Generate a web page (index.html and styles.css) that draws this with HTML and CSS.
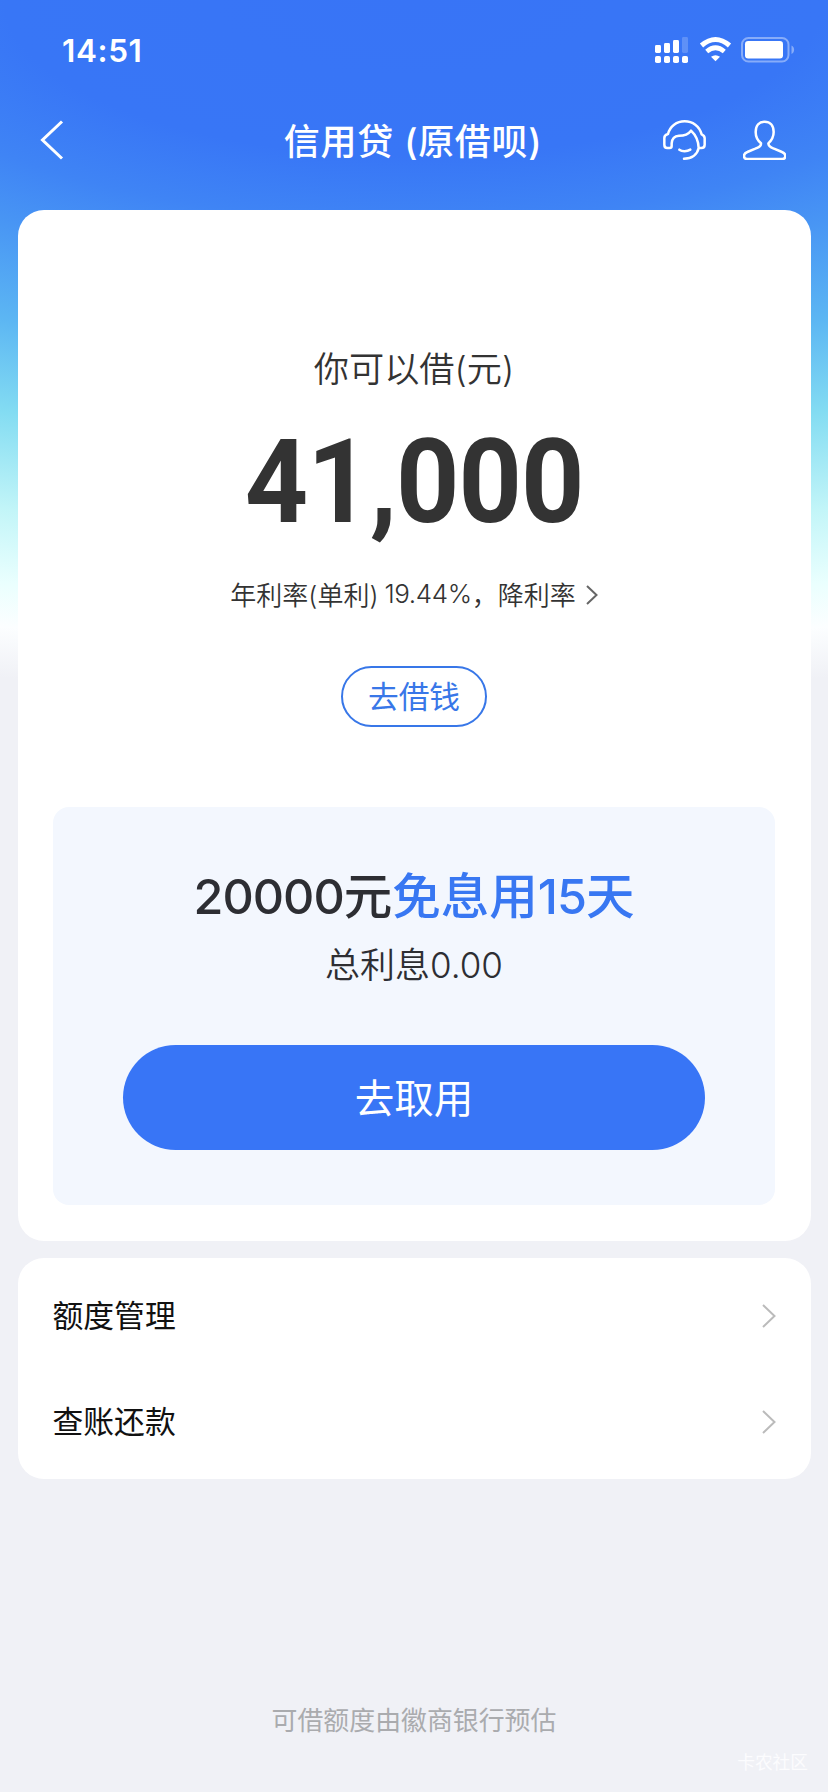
FILE: index.html
```html
<!DOCTYPE html>
<html lang="zh-CN">
<head>
<meta charset="utf-8">
<title>信用贷</title>
<link rel="stylesheet" href="styles.css">
</head>
<body>
<div class="page">
  <div class="status">
    <span class="time">14:51</span>
    <svg class="status-icons" width="140" height="30" viewBox="655 35 140 30">
      <g fill="#fff">
        <rect x="655" y="45" width="6" height="8" rx="1.4"/>
        <rect x="664" y="43" width="6" height="10" rx="1.4"/>
        <rect x="673" y="40" width="6" height="13" rx="1.4"/>
        <rect x="682" y="37" width="6" height="16" rx="1.4" opacity=".2"/>
        <rect x="655" y="56" width="6" height="7" rx="1.8"/>
        <rect x="664" y="56" width="6" height="7" rx="1.8"/>
        <rect x="673" y="56" width="6" height="7" rx="1.8"/>
        <rect x="682" y="56" width="6" height="7" rx="1.8"/>
        <path d="M711 56.800Q715.500 53.600 720 56.800L715.500 61.300Z"/>
        <rect x="745" y="41" width="38" height="17.500" rx="3.200"/>
        <path d="M791.500 45.500C795 47 795 52.500 791.500 54Z" opacity=".4"/>
      </g>
      <g fill="none" stroke="#fff">
        <path d="M701.500 45.500Q715.500 33.500 729.500 45.500" stroke-width="5"/>
        <path d="M706.700 51.500Q715.500 44 724.300 51.500" stroke-width="4.600"/>
        <rect x="742" y="38" width="46.500" height="23.500" rx="6.500" stroke-width="2" opacity=".4"/>
      </g>
    </svg>
  </div>
  <div class="nav">
    <svg class="back" width="24" height="40" viewBox="0 0 24 40"><path d="M22 1.500L2.500 20L22 38.500"/></svg>
    <h1 class="title">信用贷 (原借呗)</h1>
    <div class="actions">
      <svg width="43" height="40" viewBox="67 60 129 120"><path d="M82 102C88 78 108 64 132 64C156 64 176 78 183 103C190 106 192 109 192 115V134C192 141 188 144 182 144H174C173 118 163 103 151 92C142 104 130 107 115 107C102 108 94 115 93 130V138C93 141 91 144 87 144H80C74 144 71 141 71 134V114C71 108 74 104 82 102M174 144C170 163 154 176 130 176M116 149C124 155 139 155 149 149"/></svg>
      <svg width="43" height="40" viewBox="307 60 129 120"><path d="M361 130C349 120 345 110 345 96C345 76 356 65 372 65C388 65 399 76 399 96C399 110 394 120 383 130C383 140 392 143 400 146L424 156C432 159 434 163 434 168C434 174 431 177 425 177H319C313 177 310 174 310 168C310 163 312 159 320 156L344 146C353 142 362 140 361 130Z"/></svg>
    </div>
  </div>
  <main class="content">
    <section class="card loan">
      <div class="label">你可以借(元)</div>
      <div class="amount">41,000</div>
      <div class="rate"><span class="rate-name">年利率(单利)</span><span class="rate-value">19.44%</span><span>，降利率</span><svg width="12" height="20" viewBox="0 0 12 20"><path d="M1 1L10.500 10L1 19"/></svg></div>
      <div class="borrow">去借钱</div>
      <div class="offer">
        <div class="headline"><span class="digits">20000</span>元<span class="accent">免息用<span class="digits">15</span>天</span></div>
        <div class="interest">总利息<span class="digits">0.00</span></div>
        <div class="cta">去取用</div>
      </div>
    </section>
    <section class="card menu">
      <div class="row"><span>额度管理</span><svg width="14" height="24" viewBox="0 0 14 24"><path d="M1 1L12.500 12L1 23"/></svg></div>
      <div class="row"><span>查账还款</span><svg width="14" height="24" viewBox="0 0 14 24"><path d="M1 1L12.500 12L1 23"/></svg></div>
    </section>
  </main>
  <footer class="footer">
    <div class="note">可借额度由徽商银行预估</div>
    <div class="mark">卡农社区</div>
  </footer>
</div>
</body>
</html>
```

FILE: styles.css
```css
* { box-sizing: border-box; }
body { margin: 0; }
.page {
  width: 828px;
  height: 1792px;
  display: flex;
  flex-direction: column;
  overflow: hidden;
  font-family: Inter, "Noto Sans CJK SC", sans-serif;
  color: #333;
  background:
    radial-gradient(ellipse 1860px 710px at 50% 0, #3874f6 0%, #3876f6 22%, #3f84f5 31%, #4895f4 38%, #5cb6f3 50%, #83dcf2 62%, #c2f5f8 75%, #eafffe 85%, #fcfeff 91%, #f0f1f6 98%) no-repeat,
    #f0f1f6;
}
.status {
  height: 100px;
  padding: 0 33px 0 62px;
  display: flex;
  align-items: center;
  justify-content: space-between;
  color: #fff;
}
.time { padding-top: 1px; font-size: 31.500px; font-weight: 600; line-height: 40px; letter-spacing: .6px; }
.nav {
  height: 80px;
  padding: 0 42px 0 40px;
  display: grid;
  grid-template-columns: 123px 1fr 123px;
  align-items: center;
}
.nav svg { fill: none; stroke: #fff; }
.back { stroke-width: 3; }
.title {
  margin: 0;
  padding-top: 3px;
  text-align: center;
  font-size: 36px;
  line-height: 50px;
  font-weight: 500;
  letter-spacing: .7px;
  color: #fff;
  white-space: nowrap;
}
.actions { display: flex; justify-content: space-between; stroke-width: 7.500; stroke-linecap: round; stroke-linejoin: round; }
.content { padding: 30px 17.500px 0; }
.card { background: #fff; border-radius: 26px; }
.loan {
  height: 1031px;
  padding: 134px 35px 35px;
  display: flex;
  flex-direction: column;
  align-items: center;
}
.label { font-size: 35.200px; line-height: 50px; font-weight: 350; }
.amount {
  margin-top: 28px;
  font-family: Roboto, sans-serif;
  font-size: 117px;
  line-height: 120px;
  font-weight: 700;
  letter-spacing: -1px;
  transform: scaleX(.945);
}
.rate { margin-top: 33px; height: 40px; display: flex; align-items: center; font-size: 26px; font-weight: 350; }
.rate span { padding-bottom: 3px; }
.rate svg { margin-left: 10px; fill: none; stroke: #666; stroke-width: 2; }
.rate-value { margin-left: 6px; letter-spacing: -.4px; }
.borrow {
  margin-top: 51px;
  width: 146px;
  height: 61px;
  border: 2px solid #3877e8;
  border-radius: 31px;
  text-align: center;
  font-size: 30.700px;
  line-height: 57px;
  color: #3877e8;
}
.offer {
  margin-top: 80px;
  width: 722px;
  height: 398px;
  border-radius: 16px;
  background: #f3f7fe;
  display: flex;
  flex-direction: column;
  align-items: center;
  color: #2d2e33;
}
.headline { margin-top: 60px; font-size: 48.500px; line-height: 60px; font-weight: 500; }
.headline .digits { letter-spacing: -1px; }
.accent { color: #3877f2; }
.interest { margin-top: 13px; font-size: 35px; line-height: 50px; font-weight: 350; }
.cta {
  margin-top: 55px;
  width: 582px;
  height: 105px;
  border-radius: 53px;
  background: #3875f6;
  color: #fff;
  text-align: center;
  font-size: 39.500px;
  line-height: 108px;
}
.menu { margin-top: 17px; height: 221px; padding: 5px 35px; color: #111; }
.row { height: 106px; display: flex; align-items: center; justify-content: space-between; font-size: 30.800px; }
.row span { padding-bottom: 5px; }
.row svg { fill: none; stroke: #bbb; stroke-width: 2; }
.footer { flex: 1; padding: 222px 20px 0; display: flex; flex-direction: column; }
.note { text-align: center; font-size: 25.900px; line-height: 40px; color: #aaabae; }
.mark { align-self: flex-end; margin-top: 7px; font-size: 17.700px; line-height: 30px; color: #fcfcfe; }
```
